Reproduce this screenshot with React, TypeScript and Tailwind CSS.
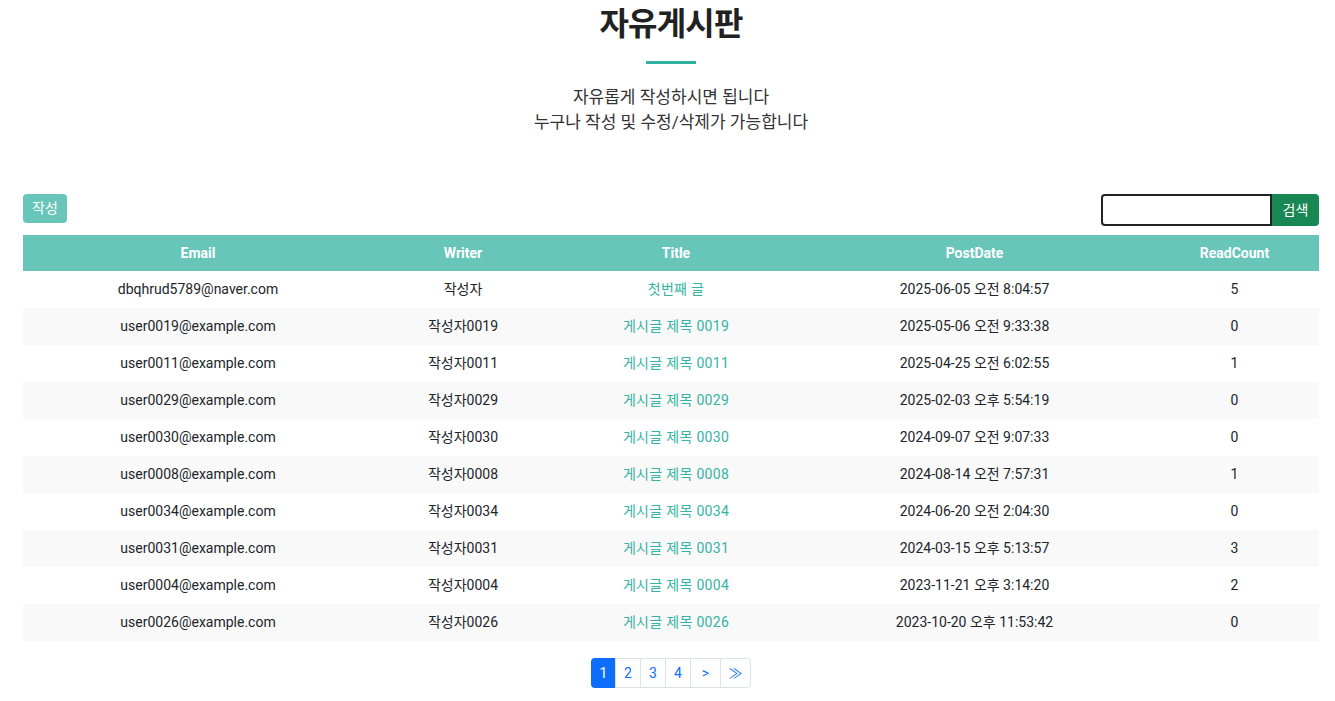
const rows = [
  ["dbqhrud5789@naver.com", "작성자", "첫번째 글", "2025-06-05 오전 8:04:57", "5"],
  ["user0019@example.com", "작성자0019", "게시글 제목 0019", "2025-05-06 오전 9:33:38", "0"],
  ["user0011@example.com", "작성자0011", "게시글 제목 0011", "2025-04-25 오전 6:02:55", "1"],
  ["user0029@example.com", "작성자0029", "게시글 제목 0029", "2025-02-03 오후 5:54:19", "0"],
  ["user0030@example.com", "작성자0030", "게시글 제목 0030", "2024-09-07 오전 9:07:33", "0"],
  ["user0008@example.com", "작성자0008", "게시글 제목 0008", "2024-08-14 오전 7:57:31", "1"],
  ["user0034@example.com", "작성자0034", "게시글 제목 0034", "2024-06-20 오전 2:04:30", "0"],
  ["user0031@example.com", "작성자0031", "게시글 제목 0031", "2024-03-15 오후 5:13:57", "3"],
  ["user0004@example.com", "작성자0004", "게시글 제목 0004", "2023-11-21 오후 3:14:20", "2"],
  ["user0026@example.com", "작성자0026", "게시글 제목 0026", "2023-10-20 오후 11:53:42", "0"],
]

const pages = ["2", "3", "4", ">", "≫"]

export default function App() {
  return (
    <div className="bg-white text-[#212529] font-['Roboto','Noto_Sans_CJK_KR',sans-serif]">
      <div className="pl-[23px] pr-[16px]">
        <div className="flex flex-col items-center pt-[4px]">
          <h1 className="text-[32px] font-bold leading-[40px] tracking-tight text-[#212121]">자유게시판</h1>
          <div className="mt-[17px] h-[3px] w-[50px] bg-[#2fb2a0]" />
          <div className="mt-[21px] text-center text-[17px] leading-[25px] text-[#333]">
            <p>자유롭게 작성하시면 됩니다</p>
            <p>누구나 작성 및 수정/삭제가 가능합니다</p>
          </div>
        </div>

        <div className="mt-[59px] flex items-start justify-between">
          <button className="h-[29px] rounded-[4px] bg-[#68c5b9] px-[9px] text-[14px] text-white">작성</button>
          <div className="flex">
            <input className="h-[32px] w-[171px] rounded-l-[4px] border-2 border-[#222] bg-white px-2 text-[14px] outline-none" />
            <button className="h-[32px] w-[47px] rounded-r-[4px] bg-[#198754] text-[14px] text-white">검색</button>
          </div>
        </div>

        <table className="mt-[9px] w-full table-fixed border-collapse text-[14px]">
          <colgroup>
            <col className="w-[350px]" />
            <col className="w-[180px]" />
            <col className="w-[246px]" />
            <col className="w-[351px]" />
            <col />
          </colgroup>
          <thead>
            <tr className="h-[36px] bg-[#68c5b9] text-white">
              {["Email", "Writer", "Title", "PostDate", "ReadCount"].map((h) => (
                <th key={h} className="font-bold">{h}</th>
              ))}
            </tr>
          </thead>
          <tbody>
            {rows.map((r, i) => (
              <tr key={i} className={`h-[37px] ${i % 2 === 1 ? "bg-[#f9f9f9]" : "bg-white"}`}>
                <td className="text-center">{r[0]}</td>
                <td className="text-center">{r[1]}</td>
                <td className="text-center tracking-[0.3px] text-[#36b3a4]">{r[2]}</td>
                <td className="text-center">{r[3]}</td>
                <td className="text-center">{r[4]}</td>
              </tr>
            ))}
          </tbody>
        </table>

        <div className="mt-[17px] flex justify-center">
          <div className="flex h-[30px] text-[14px]">
            <span className="flex w-[25px] items-center justify-center rounded-l-[4px] bg-[#0d6efd] text-white">1</span>
            {pages.map((p, i) => (
              <span
                key={p}
                className={`-ml-px flex items-center justify-center border border-[#dee2e6] text-[#0d6efd] ${i >= 3 ? "w-[31px]" : "w-[26px]"} ${i === 4 ? "rounded-r-[4px]" : ""}`}
              >
                {p}
              </span>
            ))}
          </div>
        </div>
      </div>
    </div>
  )
}
